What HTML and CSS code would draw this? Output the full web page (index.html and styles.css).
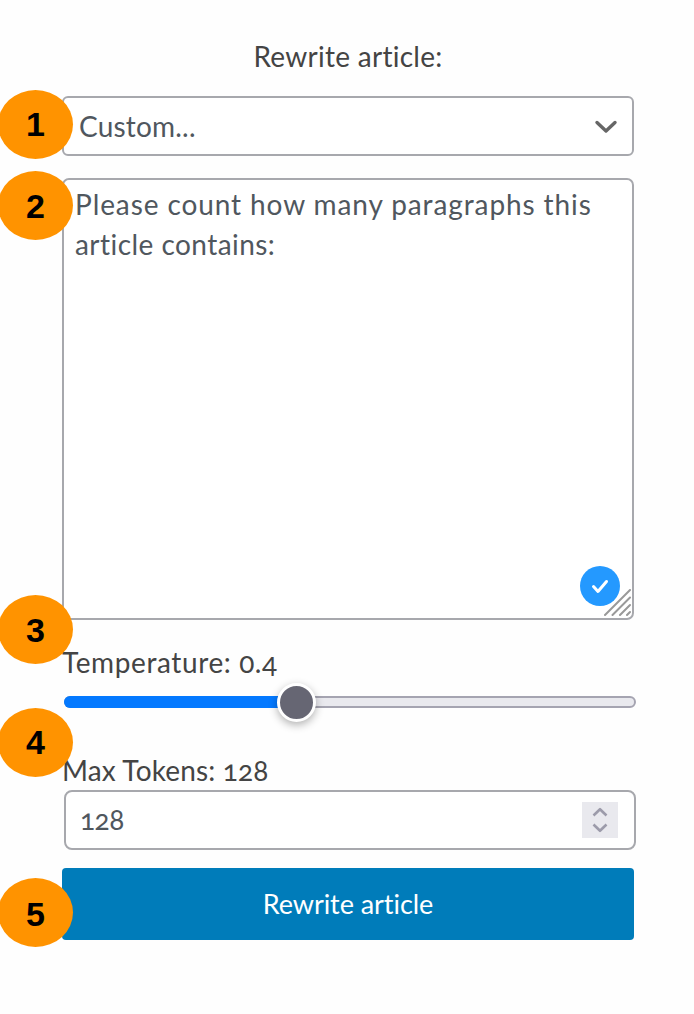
FILE: index.html
```html
<!DOCTYPE html>
<html lang="en">
<head>
<meta charset="utf-8">
<title>Rewrite article</title>
<link rel="stylesheet" href="styles.css">
</head>
<body>
<main class="panel">
  <h1 class="title"><span class="t-title">Rewrite article:</span></h1>
  <div class="select">
    <span class="t-custom">Custom...</span>
    <svg class="chevron" width="24" height="16" viewBox="0 0 24 16"><path d="M3 4.500 12 13 21 4.500"/></svg>
  </div>
  <div class="textarea">
    <span class="t-line1">Please count how many paragraphs this</span><br>
    <span class="t-line2">article contains:</span>
    <svg class="check" width="40" height="40" viewBox="0 0 40 40"><circle cx="20" cy="20" r="20"/><path d="M13.500 20.500 18 25.500 26.500 15.500"/></svg>
    <svg class="grip" width="28" height="28" viewBox="0 0 28 28"><path d="M2 26 27 1M9.500 26 27 8.500M17 26 27 16M24 26 27 23"/></svg>
  </div>
  <label class="label temperature"><span class="t-temp">Temperature: 0.4</span></label>
  <div class="slider"><div class="fill"></div><div class="thumb"></div></div>
  <label class="label tokens"><span class="t-max">Max Tokens: 128</span></label>
  <div class="number">
    <span class="t-num">128</span>
    <svg class="spinner" width="36" height="36" viewBox="0 0 36 36"><path d="M11.500 13.500 18 7.200 24.500 13.500M11.500 22.500 18 28.800 24.500 22.500"/></svg>
  </div>
  <button class="submit"><span class="t-btn">Rewrite article</span></button>
</main>
<span class="badge b1">1</span>
<span class="badge b2">2</span>
<span class="badge b3">3</span>
<span class="badge b4">4</span>
<span class="badge b5">5</span>
</body>
</html>
```
FILE: styles.css
```css
* { box-sizing: border-box; }
body {
  margin: 0;
  position: relative;
  height: 1014px;
  overflow: hidden;
  background: #fefefe;
  color: #444;
  font: 28px/40px Lato, "Open Sans", sans-serif;
  font-feature-settings: "onum";
  font-variant-ligatures: none;
}
svg { fill: none; stroke-linecap: round; stroke-linejoin: round; }
.panel { display: flex; flex-direction: column; width: 572px; margin-left: 62px; padding-top: 36px; }
.panel span { white-space: nowrap; }
.title { margin: 0 0 20px; font-size: 28px; font-weight: 400; text-align: center; }
.t-title { letter-spacing: .27px; }
.t-custom { letter-spacing: .2px; }
.t-line1 { letter-spacing: .9px; }
.t-line2 { letter-spacing: .45px; }
.t-temp { letter-spacing: .6px; }
.t-max { letter-spacing: .15px; }
.t-num { letter-spacing: -.5px; padding-bottom: 2px; }
.t-btn { font-size: 27px; letter-spacing: -.05px; }
.select, .textarea, .number { background: #fff; border: 2px solid #a7a8ad; color: #50575e; }
.select { display: flex; align-items: center; justify-content: space-between; height: 60px; padding: 0 14px 0 15px; border-radius: 6px; }
.chevron { stroke: #666; stroke-width: 3.4; }
.textarea { position: relative; height: 442px; margin-top: 22px; padding: 4px 11px; border-radius: 7px; }
.check { position: absolute; right: 12px; bottom: 12px; }
.check circle { fill: #2499ff; }
.check path { stroke: #fff; stroke-width: 3; }
.grip { position: absolute; right: 1px; bottom: 1px; stroke: #999; stroke-width: 2; }
.label { height: 40px; }
.temperature { margin-top: 22px; }
.slider { position: relative; width: 572px; height: 12px; margin: 14px 0 0 2px; background: #e9e9ee; border: 2px solid #a5a4b1; border-radius: 6px; }
.fill { width: 232px; height: 12px; margin: -2px; background: #0479ff; border-radius: 6px 0 0 6px; }
.thumb { position: absolute; left: 211px; top: -15px; width: 39px; height: 39px; background: #666673; border: 3px solid #fff; border-radius: 50%; box-shadow: 0 3px 8px rgba(0, 0, 0, .3); }
.tokens { margin-top: 42px; }
.number { display: flex; align-items: center; justify-content: space-between; width: 572px; height: 60px; margin: 0 0 0 2px; padding: 0 16px 0 14px; border-radius: 8px; }
.spinner { background: #e9e9ee; stroke: #9c9baa; stroke-width: 2.6; stroke-linecap: butt; }
.submit { height: 72px; margin-top: 18px; padding: 0 0 2px; background: #007cba; border: 0; border-radius: 4px; color: #fff; font: inherit; font-feature-settings: inherit; }
.badge { position: absolute; left: -2px; width: 75px; height: 69px; border-radius: 50%; background: #ff9300; color: #000; font: bold 34px/69px "Liberation Sans", Arial, sans-serif; text-align: center; }
.b1 { top: 90px; }
.b2 { top: 171px; line-height: 71px; }
.b3 { top: 595px; line-height: 71px; }
.b4 { top: 708px; }
.b5 { top: 878px; line-height: 73px; }
```
